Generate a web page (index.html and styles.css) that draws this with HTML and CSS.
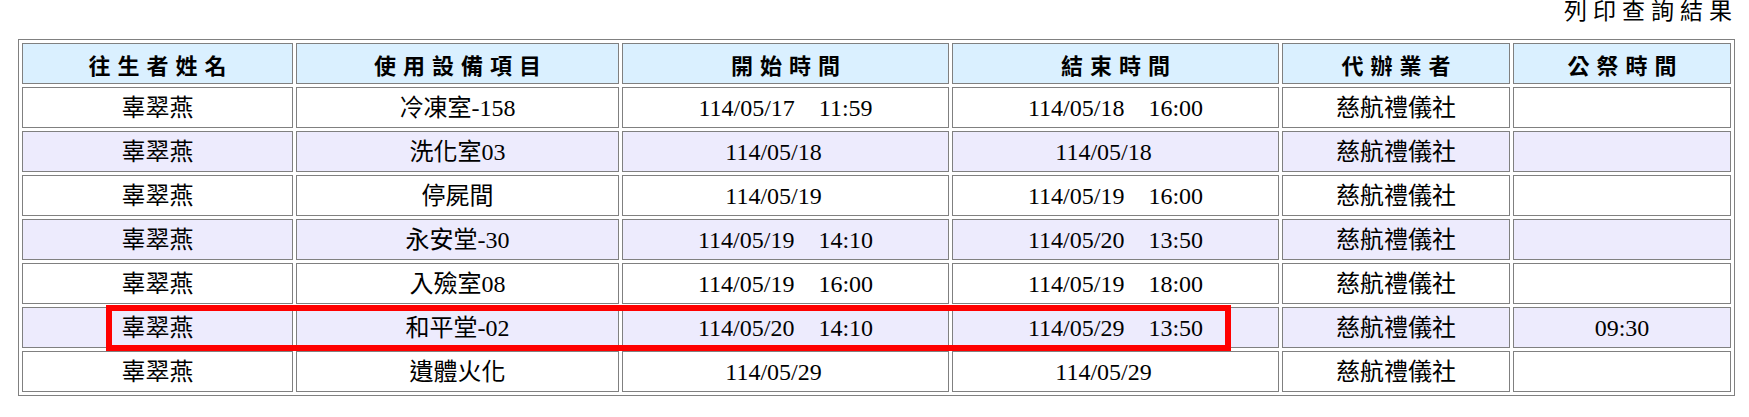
FILE: index.html
```html
<!DOCTYPE html>
<html lang="zh-Hant">
<head>
    <meta charset="UTF-8">
    <title>列印查詢結果</title>
    <link rel="stylesheet" href="styles.css">
</head>
<body>
    <div class="page">
        <!-- Print link -->
        <div class="print-title">列印查詢結果</div>

        <!-- Result table -->
        <div class="result">
            <table class="result-table">
                <thead>
                    <tr>
                        <th class="c1">往生者姓名</th>
                        <th class="c2">使用設備項目</th>
                        <th class="c3">開始時間</th>
                        <th class="c4">結束時間</th>
                        <th class="c5">代辦業者</th>
                        <th class="c6">公祭時間</th>
                    </tr>
                </thead>
                <tbody>
                    <tr>
                        <td>辜翠燕</td>
                        <td>冷凍室-158</td>
                        <td>114/05/17&nbsp;&nbsp;&nbsp;&nbsp;11:59</td>
                        <td>114/05/18&nbsp;&nbsp;&nbsp;&nbsp;16:00</td>
                        <td>慈航禮儀社</td>
                        <td></td>
                    </tr>
                    <tr class="alt">
                        <td>辜翠燕</td>
                        <td>洗化室03</td>
                        <td>114/05/18&nbsp;&nbsp;&nbsp;&nbsp;</td>
                        <td>114/05/18&nbsp;&nbsp;&nbsp;&nbsp;</td>
                        <td>慈航禮儀社</td>
                        <td></td>
                    </tr>
                    <tr>
                        <td>辜翠燕</td>
                        <td>停屍間</td>
                        <td>114/05/19&nbsp;&nbsp;&nbsp;&nbsp;</td>
                        <td>114/05/19&nbsp;&nbsp;&nbsp;&nbsp;16:00</td>
                        <td>慈航禮儀社</td>
                        <td></td>
                    </tr>
                    <tr class="alt">
                        <td>辜翠燕</td>
                        <td>永安堂-30</td>
                        <td>114/05/19&nbsp;&nbsp;&nbsp;&nbsp;14:10</td>
                        <td>114/05/20&nbsp;&nbsp;&nbsp;&nbsp;13:50</td>
                        <td>慈航禮儀社</td>
                        <td></td>
                    </tr>
                    <tr>
                        <td>辜翠燕</td>
                        <td>入殮室08</td>
                        <td>114/05/19&nbsp;&nbsp;&nbsp;&nbsp;16:00</td>
                        <td>114/05/19&nbsp;&nbsp;&nbsp;&nbsp;18:00</td>
                        <td>慈航禮儀社</td>
                        <td></td>
                    </tr>
                    <tr class="alt">
                        <td>辜翠燕</td>
                        <td>和平堂-02</td>
                        <td>114/05/20&nbsp;&nbsp;&nbsp;&nbsp;14:10</td>
                        <td>114/05/29&nbsp;&nbsp;&nbsp;&nbsp;13:50</td>
                        <td>慈航禮儀社</td>
                        <td>09:30</td>
                    </tr>
                    <tr>
                        <td>辜翠燕</td>
                        <td>遺體火化</td>
                        <td>114/05/29&nbsp;&nbsp;&nbsp;&nbsp;</td>
                        <td>114/05/29&nbsp;&nbsp;&nbsp;&nbsp;</td>
                        <td>慈航禮儀社</td>
                        <td></td>
                    </tr>
                </tbody>
            </table>
            <!-- highlight box drawn over the row -->
            <div class="mark"></div>
        </div>
    </div>
</body>
</html>
```
FILE: styles.css
```css
body {
    margin: 0;
    font-family: "Liberation Serif", "Noto Sans CJK TC", serif;
    color: #000;
    background-color: #fff;
}
.page {
    width: 1717px;
    margin-left: 18px;
}
.print-title {
    font-family: "Noto Sans CJK TC", sans-serif;
    font-size: 23px;
    line-height: 24px;
    margin-top: -3px;
    margin-bottom: 18px;
    margin-right: -3px;
    text-align: right;
    letter-spacing: 6px;
}
.result {
    position: relative;
}
.result-table {
    width: 1717px;
    table-layout: fixed;
    border: 1px solid #808080;
    border-spacing: 3px;
}
.result-table th, .result-table td {
    box-sizing: border-box;
    height: 41px;
    padding: 0;
    border: 1px solid #808080;
    text-align: center;
    vertical-align: middle;
}
.result-table th {
    background-color: #daf0ff;
    font-family: "Noto Sans CJK TC", sans-serif;
    font-weight: bold;
    font-size: 22px;
    letter-spacing: 7px;
    padding-left: 7px;
}
.result-table td {
    font-size: 24px;
    line-height: 28px;
}
.result-table tr.alt td {
    background-color: #edebfd;
}
.c1 { width: 271px; }
.c2 { width: 323px; }
.c3 { width: 327px; }
.c4 { width: 327px; }
.c5 { width: 228px; }
.c6 { width: 218px; }
.mark {
    position: absolute;
    left: 88px;
    top: 266px;
    width: 1125px;
    height: 46px;
    box-sizing: border-box;
    border: 6px solid #f00;
    pointer-events: none;
}
```
